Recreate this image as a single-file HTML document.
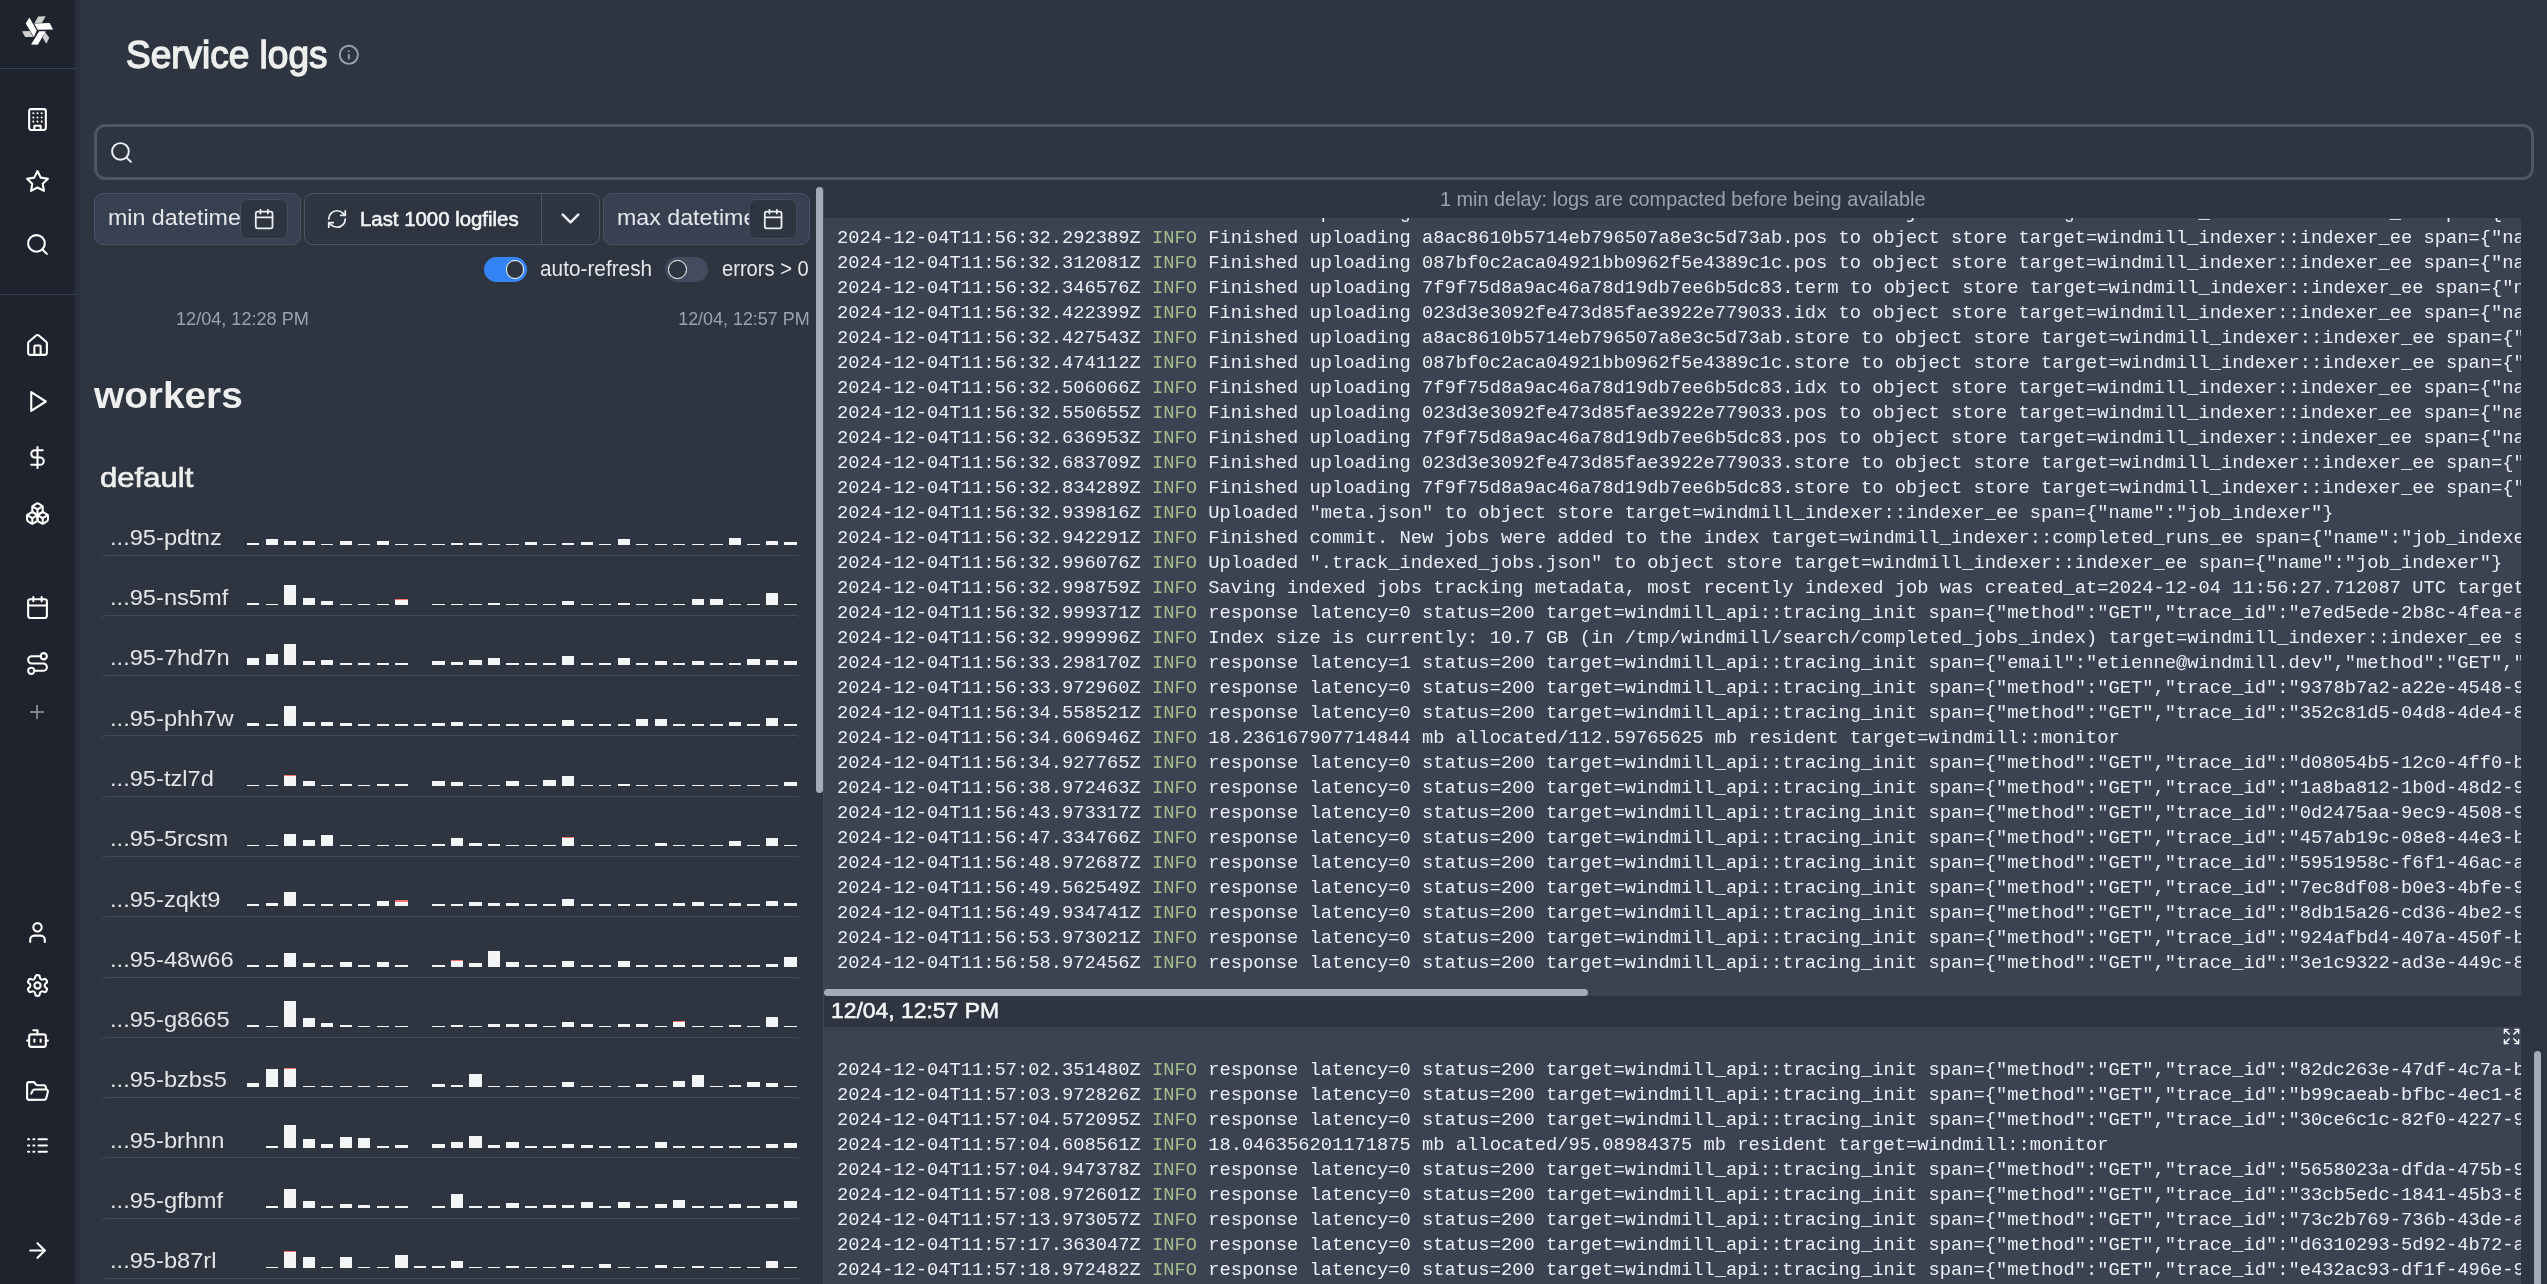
<!DOCTYPE html>
<html><head><meta charset="utf-8"><style>
html,body{margin:0;padding:0;width:2547px;height:1284px;overflow:hidden;background:#2e3440;}
</style></head><body><div style="position:absolute;left:0;top:0;width:2547px;height:1284px;will-change:transform">
<div style="position:absolute;left:74px;top:0px;width:2473px;height:1284px;box-sizing:border-box;background:#2e3440;"></div><div style="position:absolute;left:74px;top:0px;width:9px;height:1284px;box-sizing:border-box;background:linear-gradient(to right,#282d38,#2e3440);"></div><div style="position:absolute;left:0px;top:0px;width:74.8px;height:1284px;box-sizing:border-box;background:#1f232e;"></div><div style="position:absolute;left:0px;top:67.8px;width:74.8px;height:1.5px;box-sizing:border-box;background:#36404f;"></div><div style="position:absolute;left:0px;top:293.8px;width:74.8px;height:1.5px;box-sizing:border-box;background:#36404f;"></div><svg style="position:absolute;left:15px;top:8px" width="45" height="45" viewBox="0 0 1284 1284"><polygon fill="#ffffff" points="410,270 620,640 540,830 305,440"/><polygon fill="#ffffff" points="545,440 990,430 1085,612 650,620"/><polygon fill="#ffffff" points="690,660 880,660 650,1050 460,1045"/><polygon fill="#d0d0d0" points="660,240 875,235 770,420 560,430"/><polygon fill="#d0d0d0" points="200,660 420,655 520,825 290,825"/><polygon fill="#d0d0d0" points="860,690 980,850 890,1020 790,840"/></svg><svg style="position:absolute;left:25.00px;top:107.00px" width="25" height="25" viewBox="0 0 24 24" fill="none" stroke="#ffffff" stroke-width="2" stroke-linecap="round" stroke-linejoin="round" ><rect width="16" height="20" x="4" y="2" rx="2" ry="2"/><path d="M9 22v-4h6v4"/><path d="M8 6h.01"/><path d="M16 6h.01"/><path d="M12 6h.01"/><path d="M12 10h.01"/><path d="M12 14h.01"/><path d="M16 10h.01"/><path d="M16 14h.01"/><path d="M8 10h.01"/><path d="M8 14h.01"/></svg><svg style="position:absolute;left:25.00px;top:168.50px" width="25" height="25" viewBox="0 0 24 24" fill="none" stroke="#ffffff" stroke-width="2" stroke-linecap="round" stroke-linejoin="round" ><polygon points="12 2 15.09 8.26 22 9.27 17 14.14 18.18 21.02 12 17.77 5.82 21.02 7 14.14 2 9.27 8.91 8.26 12 2"/></svg><svg style="position:absolute;left:25.00px;top:232.00px" width="25" height="25" viewBox="0 0 24 24" fill="none" stroke="#ffffff" stroke-width="2" stroke-linecap="round" stroke-linejoin="round" ><circle cx="11" cy="11" r="8"/><path d="m21 21-4.3-4.3"/></svg><svg style="position:absolute;left:25.00px;top:332.50px" width="25" height="25" viewBox="0 0 24 24" fill="none" stroke="#ffffff" stroke-width="2" stroke-linecap="round" stroke-linejoin="round" ><path d="M15 21v-8a1 1 0 0 0-1-1h-4a1 1 0 0 0-1 1v8"/><path d="M3 10a2 2 0 0 1 .709-1.528l7-5.999a2 2 0 0 1 2.582 0l7 5.999A2 2 0 0 1 21 10v9a2 2 0 0 1-2 2H5a2 2 0 0 1-2-2z"/></svg><svg style="position:absolute;left:25.00px;top:388.50px" width="25" height="25" viewBox="0 0 24 24" fill="none" stroke="#ffffff" stroke-width="2" stroke-linecap="round" stroke-linejoin="round" ><polygon points="6 3 20 12 6 21 6 3"/></svg><svg style="position:absolute;left:25.00px;top:444.50px" width="25" height="25" viewBox="0 0 24 24" fill="none" stroke="#ffffff" stroke-width="2" stroke-linecap="round" stroke-linejoin="round" ><line x1="12" x2="12" y1="2" y2="22"/><path d="M17 5H9.5a3.5 3.5 0 0 0 0 7h5a3.5 3.5 0 0 1 0 7H6"/></svg><svg style="position:absolute;left:25.00px;top:500.50px" width="25" height="25" viewBox="0 0 24 24" fill="none" stroke="#ffffff" stroke-width="2" stroke-linecap="round" stroke-linejoin="round" ><path d="M2.97 12.92A2 2 0 0 0 2 14.63v3.24a2 2 0 0 0 .97 1.71l3 1.8a2 2 0 0 0 2.06 0L12 19v-5.5l-5-3-4.03 2.42Z"/><path d="m7 16.5-4.74-2.850"/><path d="m7 16.5 5-3"/><path d="M7 16.5v5.17"/><path d="M12 13.5V19l3.970 2.38a2 2 0 0 0 2.06 0l3-1.8a2 2 0 0 0 .97-1.71v-3.24a2 2 0 0 0-.97-1.71L17 10.5l-5 3Z"/><path d="m17 16.5-5-3"/><path d="m17 16.5 4.74-2.85"/><path d="M17 16.5v5.17"/><path d="M7.97 4.42A2 2 0 0 0 7 6.13v4.37l5 3 5-3V6.13a2 2 0 0 0-.97-1.71l-3-1.8a2 2 0 0 0-2.06 0l-3 1.8Z"/><path d="M12 8 7.26 5.15"/><path d="m12 8 4.74-2.85"/><path d="M12 13.5V8"/></svg><svg style="position:absolute;left:25.00px;top:594.50px" width="25" height="25" viewBox="0 0 24 24" fill="none" stroke="#ffffff" stroke-width="2" stroke-linecap="round" stroke-linejoin="round" ><rect width="18" height="18" x="3" y="4" rx="2" ry="2"/><line x1="16" x2="16" y1="2" y2="6"/><line x1="8" x2="8" y1="2" y2="6"/><line x1="3" x2="21" y1="10" y2="10"/></svg><svg style="position:absolute;left:25.00px;top:650.50px" width="25" height="25" viewBox="0 0 24 24" fill="none" stroke="#ffffff" stroke-width="2" stroke-linecap="round" stroke-linejoin="round" ><circle cx="6" cy="19" r="3"/><path d="M9 19h8.5a3.5 3.5 0 0 0 0-7h-11a3.5 3.5 0 0 1 0-7H15"/><circle cx="18" cy="5" r="3"/></svg><svg style="position:absolute;left:25.00px;top:919.50px" width="25" height="25" viewBox="0 0 24 24" fill="none" stroke="#ffffff" stroke-width="2" stroke-linecap="round" stroke-linejoin="round" ><path d="M19 21v-2a4 4 0 0 0-4-4H9a4 4 0 0 0-4 4v2"/><circle cx="12" cy="7" r="4"/></svg><svg style="position:absolute;left:25.00px;top:972.50px" width="25" height="25" viewBox="0 0 24 24" fill="none" stroke="#ffffff" stroke-width="2" stroke-linecap="round" stroke-linejoin="round" ><path d="M12.22 2h-.44a2 2 0 0 0-2 2v.18a2 2 0 0 1-1 1.73l-.43.25a2 2 0 0 1-2 0l-.15-.08a2 2 0 0 0-2.73.73l-.22.38a2 2 0 0 0 .73 2.73l.15.1a2 2 0 0 1 1 1.72v.51a2 2 0 0 1-1 1.74l-.15.09a2 2 0 0 0-.73 2.73l.22.38a2 2 0 0 0 2.73.73l.15-.08a2 2 0 0 1 2 0l.43.25a2 2 0 0 1 1 1.73V20a2 2 0 0 0 2 2h.44a2 2 0 0 0 2-2v-.18a2 2 0 0 1 1-1.73l.43-.25a2 2 0 0 1 2 0l.15.08a2 2 0 0 0 2.73-.73l.22-.39a2 2 0 0 0-.73-2.730l-.15-.08a2 2 0 0 1-1-1.74v-.5a2 2 0 0 1 1-1.74l.15-.09a2 2 0 0 0 .73-2.73l-.22-.38a2 2 0 0 0-2.73-.73l-.15.08a2 2 0 0 1-2 0l-.43-.25a2 2 0 0 1-1-1.73V4a2 2 0 0 0-2-2z"/><circle cx="12" cy="12" r="3"/></svg><svg style="position:absolute;left:25.00px;top:1025.50px" width="25" height="25" viewBox="0 0 24 24" fill="none" stroke="#ffffff" stroke-width="2" stroke-linecap="round" stroke-linejoin="round" ><path d="M12 8V4H8"/><rect width="16" height="12" x="4" y="8" rx="2"/><path d="M2 14h2"/><path d="M20 14h2"/><path d="M15 13v2"/><path d="M9 13v2"/></svg><svg style="position:absolute;left:25.00px;top:1078.50px" width="25" height="25" viewBox="0 0 24 24" fill="none" stroke="#ffffff" stroke-width="2" stroke-linecap="round" stroke-linejoin="round" ><path d="m6 14 1.5-2.9A2 2 0 0 1 9.24 10H20a2 2 0 0 1 1.940 2.5l-1.54 6a2 2 0 0 1-1.95 1.5H4a2 2 0 0 1-2-2V5a2 2 0 0 1 2-2h3.9a2 2 0 0 1 1.69.9l.81 1.2a2 2 0 0 0 1.67.9H18a2 2 0 0 1 2 2v2"/></svg><svg style="position:absolute;left:25.00px;top:1132.50px" width="25" height="25" viewBox="0 0 24 24" fill="none" stroke="#ffffff" stroke-width="2" stroke-linecap="round" stroke-linejoin="round" ><path d="M13 12h8"/><path d="M13 18h8"/><path d="M13 6h8"/><path d="M3 12h1"/><path d="M3 18h1"/><path d="M3 6h1"/><path d="M8 12h1"/><path d="M8 18h1"/><path d="M8 6h1"/></svg><svg style="position:absolute;left:25.00px;top:1237.50px" width="25" height="25" viewBox="0 0 24 24" fill="none" stroke="#ffffff" stroke-width="2" stroke-linecap="round" stroke-linejoin="round" ><path d="M5 12h14"/><path d="m12 5 7 7-7 7"/></svg><svg style="position:absolute;left:26.00px;top:701.00px" width="22" height="22" viewBox="0 0 24 24" fill="none" stroke="#9ca3af" stroke-width="1.6" stroke-linecap="round" stroke-linejoin="round" ><path d="M5 12h14"/><path d="M12 5v14"/></svg><div style="position:absolute;left:125.50px;top:33.18px;font:400 38.7px/44.47px 'Liberation Sans', sans-serif;color:#eeeeee;white-space:pre;transform:scaleX(0.956);transform-origin:0 0;-webkit-text-stroke:1.4px #eeeeee;">Service logs</div><svg style="position:absolute;left:337.55px;top:44.05px" width="21.7" height="21.7" viewBox="0 0 24 24" fill="none" stroke="#9aa3b3" stroke-width="2.1" stroke-linecap="round" stroke-linejoin="round" ><circle cx="12" cy="12" r="10"/><path d="M12 16v-4"/><path d="M12 8h.01"/></svg><div style="position:absolute;left:94px;top:124px;width:2440px;height:55.7px;box-sizing:border-box;border:3px solid #4b5767;border-radius:11.5px;"></div><svg style="position:absolute;left:108.90px;top:140.00px" width="25" height="25" viewBox="0 0 24 24" fill="none" stroke="#eceff4" stroke-width="1.9" stroke-linecap="round" stroke-linejoin="round" ><circle cx="11" cy="11" r="8"/><path d="m21 21-4.3-4.3"/></svg><div style="position:absolute;left:94px;top:193px;width:207px;height:52px;box-sizing:border-box;background:#374151;border:1px solid #475366;border-radius:9px;"></div><div style="position:absolute;left:108.00px;top:205.18px;font:400 21.9px/25.16px 'Liberation Sans', sans-serif;color:#e5e7eb;white-space:pre;transform:scaleX(1.06);transform-origin:0 0;">min datetime</div><div style="position:absolute;left:239.5px;top:199px;width:48px;height:39.5px;box-sizing:border-box;background:#2e3440;border:1px solid #434c5c;border-radius:7px;"></div><svg style="position:absolute;left:252.75px;top:208.15px" width="22.3" height="22.3" viewBox="0 0 24 24" fill="none" stroke="#eceff4" stroke-width="1.9" stroke-linecap="round" stroke-linejoin="round" ><rect width="18" height="18" x="3" y="4" rx="2" ry="2"/><line x1="16" x2="16" y1="2" y2="6"/><line x1="8" x2="8" y1="2" y2="6"/><line x1="3" x2="21" y1="10" y2="10"/></svg><div style="position:absolute;left:304px;top:193px;width:296px;height:52px;box-sizing:border-box;border:1px solid #4b5563;border-radius:9px;"></div><div style="position:absolute;left:541px;top:193px;width:1px;height:52px;box-sizing:border-box;background:#4b5563;"></div><svg style="position:absolute;left:326.00px;top:208.00px" width="22" height="22" viewBox="0 0 24 24" fill="none" stroke="#eceff4" stroke-width="1.9" stroke-linecap="round" stroke-linejoin="round" ><path d="M3 12a9 9 0 0 1 9-9 9.75 9.75 0 0 1 6.74 2.74L21 8"/><path d="M21 3v5h-5"/><path d="M21 12a9 9 0 0 1-9 9 9.75 9.75 0 0 1-6.74-2.74L3 16"/><path d="M8 16H3v5"/></svg><div style="position:absolute;left:360.30px;top:207.56px;font:400 19.6px/22.52px 'Liberation Sans', sans-serif;color:#f3f4f6;white-space:pre;transform:scaleX(1.04);transform-origin:0 0;-webkit-text-stroke:0.55px #f3f4f6;">Last 1000 logfiles</div><svg style="position:absolute;left:555.00px;top:203.00px" width="31" height="31" viewBox="0 0 24 24" fill="none" stroke="#eceff4" stroke-width="1.9" stroke-linecap="round" stroke-linejoin="round" ><path d="m6 9 6 6 6-6"/></svg><div style="position:absolute;left:603px;top:193px;width:207px;height:52px;box-sizing:border-box;background:#374151;border:1px solid #475366;border-radius:9px;"></div><div style="position:absolute;left:617.00px;top:205.18px;font:400 21.9px/25.16px 'Liberation Sans', sans-serif;color:#e5e7eb;white-space:pre;transform:scaleX(1.06);transform-origin:0 0;">max datetime</div><div style="position:absolute;left:748.5px;top:199px;width:48px;height:39.5px;box-sizing:border-box;background:#2e3440;border:1px solid #434c5c;border-radius:7px;"></div><svg style="position:absolute;left:761.75px;top:208.15px" width="22.3" height="22.3" viewBox="0 0 24 24" fill="none" stroke="#eceff4" stroke-width="1.9" stroke-linecap="round" stroke-linejoin="round" ><rect width="18" height="18" x="3" y="4" rx="2" ry="2"/><line x1="16" x2="16" y1="2" y2="6"/><line x1="8" x2="8" y1="2" y2="6"/><line x1="3" x2="21" y1="10" y2="10"/></svg><div style="position:absolute;left:483.8px;top:256.9px;width:43.1px;height:25px;box-sizing:border-box;background:#3584f6;border-radius:12.5px;"></div><div style="position:absolute;left:505.5px;top:260.1px;width:18.6px;height:18.6px;box-sizing:border-box;border-radius:50%;border:1.6px solid #fff;background:#2e3440"></div><div style="position:absolute;left:540.00px;top:256.18px;font:400 21.9px/25.16px 'Liberation Sans', sans-serif;color:#e5e7eb;white-space:pre;transform:scaleX(0.95);transform-origin:0 0;">auto-refresh</div><div style="position:absolute;left:664.9px;top:256.9px;width:42.8px;height:25px;box-sizing:border-box;background:#434c5e;border-radius:12.5px;"></div><div style="position:absolute;left:668px;top:260.1px;width:18.6px;height:18.6px;box-sizing:border-box;border-radius:50%;border:1.6px solid #fff;background:#2e3440"></div><div style="position:absolute;left:722.00px;top:256.18px;font:400 21.9px/25.16px 'Liberation Sans', sans-serif;color:#e5e7eb;white-space:pre;transform:scaleX(0.92);transform-origin:0 0;">errors &gt; 0</div><div style="position:absolute;left:176.20px;top:308.23px;font:400 18.75px/21.54px 'Liberation Sans', sans-serif;color:#9ca3af;white-space:pre;transform:scaleX(0.965);transform-origin:0 0;">12/04, 12:28 PM</div><div style="position:absolute;right:1737.50px;top:308.23px;font:400 18.75px/21.54px 'Liberation Sans', sans-serif;color:#9ca3af;white-space:pre;transform:scaleX(0.955);transform-origin:100% 0;">12/04, 12:57 PM</div><div style="position:absolute;left:94.00px;top:374.36px;font:700 37.5px/43.09px 'Liberation Sans', sans-serif;color:#efefef;white-space:pre;transform:scaleX(1.034);transform-origin:0 0;">workers</div><div style="position:absolute;left:100.30px;top:461.21px;font:400 28.5px/32.75px 'Liberation Sans', sans-serif;color:#efefef;white-space:pre;transform:scaleX(1.09);transform-origin:0 0;-webkit-text-stroke:0.7px #efefef;">default</div><div style="position:absolute;left:823px;top:187px;width:1px;height:1097px;box-sizing:border-box;background:#3b4a5f;"></div><div style="position:absolute;left:816px;top:187px;width:7px;height:606px;box-sizing:border-box;background:#a3abb8;border-radius:4px;"></div><div style="position:absolute;left:110.20px;top:524.88px;font:400 21.9px/25.16px 'Liberation Sans', sans-serif;color:#e4e5e8;white-space:pre;transform:scaleX(1.08);transform-origin:0 0;">...95-pdtnz</div><div style="position:absolute;left:247.00px;top:542.70px;width:12.3px;height:2px;background:#f3f4f6"></div><div style="position:absolute;left:265.53px;top:538.70px;width:12.3px;height:6px;background:#f3f4f6"></div><div style="position:absolute;left:284.06px;top:540.70px;width:12.3px;height:4px;background:#f3f4f6"></div><div style="position:absolute;left:302.59px;top:540.70px;width:12.3px;height:4px;background:#f3f4f6"></div><div style="position:absolute;left:321.12px;top:543.70px;width:12.3px;height:1px;background:#f3f4f6"></div><div style="position:absolute;left:339.65px;top:540.70px;width:12.3px;height:4px;background:#f3f4f6"></div><div style="position:absolute;left:358.18px;top:543.70px;width:12.3px;height:1px;background:#f3f4f6"></div><div style="position:absolute;left:376.71px;top:540.70px;width:12.3px;height:4px;background:#f3f4f6"></div><div style="position:absolute;left:395.24px;top:543.70px;width:12.3px;height:1px;background:#f3f4f6"></div><div style="position:absolute;left:413.77px;top:543.70px;width:12.3px;height:1px;background:#f3f4f6"></div><div style="position:absolute;left:432.30px;top:543.70px;width:12.3px;height:1px;background:#f3f4f6"></div><div style="position:absolute;left:450.83px;top:542.70px;width:12.3px;height:2px;background:#f3f4f6"></div><div style="position:absolute;left:469.36px;top:542.70px;width:12.3px;height:2px;background:#f3f4f6"></div><div style="position:absolute;left:487.89px;top:543.70px;width:12.3px;height:1px;background:#f3f4f6"></div><div style="position:absolute;left:506.42px;top:543.70px;width:12.3px;height:1px;background:#f3f4f6"></div><div style="position:absolute;left:524.95px;top:541.70px;width:12.3px;height:3px;background:#f3f4f6"></div><div style="position:absolute;left:543.48px;top:543.70px;width:12.3px;height:1px;background:#f3f4f6"></div><div style="position:absolute;left:562.01px;top:542.70px;width:12.3px;height:2px;background:#f3f4f6"></div><div style="position:absolute;left:580.54px;top:541.70px;width:12.3px;height:3px;background:#f3f4f6"></div><div style="position:absolute;left:599.07px;top:543.70px;width:12.3px;height:1px;background:#f3f4f6"></div><div style="position:absolute;left:617.60px;top:538.70px;width:12.3px;height:6px;background:#f3f4f6"></div><div style="position:absolute;left:636.13px;top:543.70px;width:12.3px;height:1px;background:#f3f4f6"></div><div style="position:absolute;left:654.66px;top:543.70px;width:12.3px;height:1px;background:#f3f4f6"></div><div style="position:absolute;left:673.19px;top:543.70px;width:12.3px;height:1px;background:#f3f4f6"></div><div style="position:absolute;left:691.72px;top:543.70px;width:12.3px;height:1px;background:#f3f4f6"></div><div style="position:absolute;left:710.25px;top:543.70px;width:12.3px;height:1px;background:#f3f4f6"></div><div style="position:absolute;left:728.78px;top:537.70px;width:12.3px;height:7px;background:#f3f4f6"></div><div style="position:absolute;left:747.31px;top:543.70px;width:12.3px;height:1px;background:#f3f4f6"></div><div style="position:absolute;left:765.84px;top:540.70px;width:12.3px;height:4px;background:#f3f4f6"></div><div style="position:absolute;left:784.37px;top:541.70px;width:12.3px;height:3px;background:#f3f4f6"></div><div style="position:absolute;left:100px;top:554.50px;width:703px;height:14px;box-sizing:border-box;border-top:1px solid #424b5b;border-radius:8px"></div><div style="position:absolute;left:110.20px;top:585.17px;font:400 21.9px/25.16px 'Liberation Sans', sans-serif;color:#e4e5e8;white-space:pre;transform:scaleX(1.08);transform-origin:0 0;">...95-ns5mf</div><div style="position:absolute;left:247.00px;top:602.99px;width:12.3px;height:2px;background:#f3f4f6"></div><div style="position:absolute;left:265.53px;top:603.99px;width:12.3px;height:1px;background:#f3f4f6"></div><div style="position:absolute;left:284.06px;top:584.99px;width:12.3px;height:20px;background:#f3f4f6"></div><div style="position:absolute;left:302.59px;top:597.99px;width:12.3px;height:7px;background:#f3f4f6"></div><div style="position:absolute;left:321.12px;top:600.99px;width:12.3px;height:4px;background:#f3f4f6"></div><div style="position:absolute;left:339.65px;top:603.99px;width:12.3px;height:1px;background:#f3f4f6"></div><div style="position:absolute;left:358.18px;top:603.99px;width:12.3px;height:1px;background:#f3f4f6"></div><div style="position:absolute;left:376.71px;top:603.99px;width:12.3px;height:1px;background:#f3f4f6"></div><div style="position:absolute;left:395.24px;top:598.99px;width:12.3px;height:6px;background:#f3f4f6"></div><div style="position:absolute;left:395.24px;top:598.99px;width:12.3px;height:1.2px;background:#f87171"></div><div style="position:absolute;left:432.30px;top:603.99px;width:12.3px;height:1px;background:#f3f4f6"></div><div style="position:absolute;left:450.83px;top:603.99px;width:12.3px;height:1px;background:#f3f4f6"></div><div style="position:absolute;left:469.36px;top:603.99px;width:12.3px;height:1px;background:#f3f4f6"></div><div style="position:absolute;left:487.89px;top:602.99px;width:12.3px;height:2px;background:#f3f4f6"></div><div style="position:absolute;left:506.42px;top:603.99px;width:12.3px;height:1px;background:#f3f4f6"></div><div style="position:absolute;left:524.95px;top:603.99px;width:12.3px;height:1px;background:#f3f4f6"></div><div style="position:absolute;left:543.48px;top:603.99px;width:12.3px;height:1px;background:#f3f4f6"></div><div style="position:absolute;left:562.01px;top:600.99px;width:12.3px;height:4px;background:#f3f4f6"></div><div style="position:absolute;left:580.54px;top:603.99px;width:12.3px;height:1px;background:#f3f4f6"></div><div style="position:absolute;left:599.07px;top:603.99px;width:12.3px;height:1px;background:#f3f4f6"></div><div style="position:absolute;left:617.60px;top:602.99px;width:12.3px;height:2px;background:#f3f4f6"></div><div style="position:absolute;left:636.13px;top:603.99px;width:12.3px;height:1px;background:#f3f4f6"></div><div style="position:absolute;left:654.66px;top:603.99px;width:12.3px;height:1px;background:#f3f4f6"></div><div style="position:absolute;left:673.19px;top:603.99px;width:12.3px;height:1px;background:#f3f4f6"></div><div style="position:absolute;left:691.72px;top:598.99px;width:12.3px;height:6px;background:#f3f4f6"></div><div style="position:absolute;left:710.25px;top:598.99px;width:12.3px;height:6px;background:#f3f4f6"></div><div style="position:absolute;left:728.78px;top:603.99px;width:12.3px;height:1px;background:#f3f4f6"></div><div style="position:absolute;left:747.31px;top:603.99px;width:12.3px;height:1px;background:#f3f4f6"></div><div style="position:absolute;left:765.84px;top:592.99px;width:12.3px;height:12px;background:#f3f4f6"></div><div style="position:absolute;left:784.37px;top:603.99px;width:12.3px;height:1px;background:#f3f4f6"></div><div style="position:absolute;left:100px;top:614.79px;width:703px;height:14px;box-sizing:border-box;border-top:1px solid #424b5b;border-radius:8px"></div><div style="position:absolute;left:110.20px;top:645.46px;font:400 21.9px/25.16px 'Liberation Sans', sans-serif;color:#e4e5e8;white-space:pre;transform:scaleX(1.08);transform-origin:0 0;">...95-7hd7n</div><div style="position:absolute;left:247.00px;top:658.28px;width:12.3px;height:7px;background:#f3f4f6"></div><div style="position:absolute;left:265.53px;top:654.28px;width:12.3px;height:11px;background:#f3f4f6"></div><div style="position:absolute;left:284.06px;top:644.28px;width:12.3px;height:21px;background:#f3f4f6"></div><div style="position:absolute;left:302.59px;top:661.28px;width:12.3px;height:4px;background:#f3f4f6"></div><div style="position:absolute;left:321.12px;top:660.28px;width:12.3px;height:5px;background:#f3f4f6"></div><div style="position:absolute;left:339.65px;top:663.28px;width:12.3px;height:2px;background:#f3f4f6"></div><div style="position:absolute;left:358.18px;top:663.28px;width:12.3px;height:2px;background:#f3f4f6"></div><div style="position:absolute;left:376.71px;top:663.28px;width:12.3px;height:2px;background:#f3f4f6"></div><div style="position:absolute;left:395.24px;top:663.28px;width:12.3px;height:2px;background:#f3f4f6"></div><div style="position:absolute;left:432.30px;top:661.28px;width:12.3px;height:4px;background:#f3f4f6"></div><div style="position:absolute;left:450.83px;top:662.28px;width:12.3px;height:3px;background:#f3f4f6"></div><div style="position:absolute;left:469.36px;top:660.28px;width:12.3px;height:5px;background:#f3f4f6"></div><div style="position:absolute;left:487.89px;top:658.28px;width:12.3px;height:7px;background:#f3f4f6"></div><div style="position:absolute;left:506.42px;top:663.28px;width:12.3px;height:2px;background:#f3f4f6"></div><div style="position:absolute;left:524.95px;top:663.28px;width:12.3px;height:2px;background:#f3f4f6"></div><div style="position:absolute;left:543.48px;top:663.28px;width:12.3px;height:2px;background:#f3f4f6"></div><div style="position:absolute;left:562.01px;top:656.28px;width:12.3px;height:9px;background:#f3f4f6"></div><div style="position:absolute;left:580.54px;top:663.28px;width:12.3px;height:2px;background:#f3f4f6"></div><div style="position:absolute;left:599.07px;top:663.28px;width:12.3px;height:2px;background:#f3f4f6"></div><div style="position:absolute;left:617.60px;top:658.28px;width:12.3px;height:7px;background:#f3f4f6"></div><div style="position:absolute;left:636.13px;top:663.28px;width:12.3px;height:2px;background:#f3f4f6"></div><div style="position:absolute;left:654.66px;top:661.28px;width:12.3px;height:4px;background:#f3f4f6"></div><div style="position:absolute;left:673.19px;top:663.28px;width:12.3px;height:2px;background:#f3f4f6"></div><div style="position:absolute;left:691.72px;top:661.28px;width:12.3px;height:4px;background:#f3f4f6"></div><div style="position:absolute;left:710.25px;top:663.28px;width:12.3px;height:2px;background:#f3f4f6"></div><div style="position:absolute;left:728.78px;top:663.28px;width:12.3px;height:2px;background:#f3f4f6"></div><div style="position:absolute;left:747.31px;top:659.28px;width:12.3px;height:6px;background:#f3f4f6"></div><div style="position:absolute;left:765.84px;top:660.28px;width:12.3px;height:5px;background:#f3f4f6"></div><div style="position:absolute;left:784.37px;top:661.28px;width:12.3px;height:4px;background:#f3f4f6"></div><div style="position:absolute;left:100px;top:675.08px;width:703px;height:14px;box-sizing:border-box;border-top:1px solid #424b5b;border-radius:8px"></div><div style="position:absolute;left:110.20px;top:705.75px;font:400 21.9px/25.16px 'Liberation Sans', sans-serif;color:#e4e5e8;white-space:pre;transform:scaleX(1.08);transform-origin:0 0;">...95-phh7w</div><div style="position:absolute;left:247.00px;top:722.57px;width:12.3px;height:3px;background:#f3f4f6"></div><div style="position:absolute;left:265.53px;top:724.07px;width:12.3px;height:1.5px;background:#f3f4f6"></div><div style="position:absolute;left:284.06px;top:705.57px;width:12.3px;height:20px;background:#f3f4f6"></div><div style="position:absolute;left:302.59px;top:721.57px;width:12.3px;height:4px;background:#f3f4f6"></div><div style="position:absolute;left:321.12px;top:721.57px;width:12.3px;height:4px;background:#f3f4f6"></div><div style="position:absolute;left:339.65px;top:722.57px;width:12.3px;height:3px;background:#f3f4f6"></div><div style="position:absolute;left:358.18px;top:724.07px;width:12.3px;height:1.5px;background:#f3f4f6"></div><div style="position:absolute;left:376.71px;top:724.07px;width:12.3px;height:1.5px;background:#f3f4f6"></div><div style="position:absolute;left:395.24px;top:724.07px;width:12.3px;height:1.5px;background:#f3f4f6"></div><div style="position:absolute;left:413.77px;top:724.07px;width:12.3px;height:1.5px;background:#f3f4f6"></div><div style="position:absolute;left:432.30px;top:722.57px;width:12.3px;height:3px;background:#f3f4f6"></div><div style="position:absolute;left:450.83px;top:721.57px;width:12.3px;height:4px;background:#f3f4f6"></div><div style="position:absolute;left:469.36px;top:724.07px;width:12.3px;height:1.5px;background:#f3f4f6"></div><div style="position:absolute;left:487.89px;top:724.07px;width:12.3px;height:1.5px;background:#f3f4f6"></div><div style="position:absolute;left:506.42px;top:724.07px;width:12.3px;height:1.5px;background:#f3f4f6"></div><div style="position:absolute;left:524.95px;top:724.07px;width:12.3px;height:1.5px;background:#f3f4f6"></div><div style="position:absolute;left:543.48px;top:724.07px;width:12.3px;height:1.5px;background:#f3f4f6"></div><div style="position:absolute;left:562.01px;top:720.07px;width:12.3px;height:5.5px;background:#f3f4f6"></div><div style="position:absolute;left:580.54px;top:724.07px;width:12.3px;height:1.5px;background:#f3f4f6"></div><div style="position:absolute;left:599.07px;top:724.07px;width:12.3px;height:1.5px;background:#f3f4f6"></div><div style="position:absolute;left:617.60px;top:724.07px;width:12.3px;height:1.5px;background:#f3f4f6"></div><div style="position:absolute;left:636.13px;top:718.87px;width:12.3px;height:6.7px;background:#f3f4f6"></div><div style="position:absolute;left:654.66px;top:718.87px;width:12.3px;height:6.7px;background:#f3f4f6"></div><div style="position:absolute;left:673.19px;top:724.07px;width:12.3px;height:1.5px;background:#f3f4f6"></div><div style="position:absolute;left:691.72px;top:724.07px;width:12.3px;height:1.5px;background:#f3f4f6"></div><div style="position:absolute;left:710.25px;top:724.07px;width:12.3px;height:1.5px;background:#f3f4f6"></div><div style="position:absolute;left:728.78px;top:721.57px;width:12.3px;height:4px;background:#f3f4f6"></div><div style="position:absolute;left:747.31px;top:724.07px;width:12.3px;height:1.5px;background:#f3f4f6"></div><div style="position:absolute;left:765.84px;top:717.77px;width:12.3px;height:7.8px;background:#f3f4f6"></div><div style="position:absolute;left:784.37px;top:724.07px;width:12.3px;height:1.5px;background:#f3f4f6"></div><div style="position:absolute;left:100px;top:735.37px;width:703px;height:14px;box-sizing:border-box;border-top:1px solid #424b5b;border-radius:8px"></div><div style="position:absolute;left:110.20px;top:766.04px;font:400 21.9px/25.16px 'Liberation Sans', sans-serif;color:#e4e5e8;white-space:pre;transform:scaleX(1.08);transform-origin:0 0;">...95-tzl7d</div><div style="position:absolute;left:247.00px;top:784.86px;width:12.3px;height:1px;background:#f3f4f6"></div><div style="position:absolute;left:265.53px;top:784.86px;width:12.3px;height:1px;background:#f3f4f6"></div><div style="position:absolute;left:284.06px;top:774.86px;width:12.3px;height:11px;background:#f3f4f6"></div><div style="position:absolute;left:284.06px;top:774.86px;width:12.3px;height:1.2px;background:#f87171"></div><div style="position:absolute;left:302.59px;top:780.86px;width:12.3px;height:5px;background:#f3f4f6"></div><div style="position:absolute;left:321.12px;top:784.86px;width:12.3px;height:1px;background:#f3f4f6"></div><div style="position:absolute;left:339.65px;top:783.86px;width:12.3px;height:2px;background:#f3f4f6"></div><div style="position:absolute;left:358.18px;top:784.86px;width:12.3px;height:1px;background:#f3f4f6"></div><div style="position:absolute;left:376.71px;top:783.86px;width:12.3px;height:2px;background:#f3f4f6"></div><div style="position:absolute;left:395.24px;top:783.86px;width:12.3px;height:2px;background:#f3f4f6"></div><div style="position:absolute;left:432.30px;top:780.86px;width:12.3px;height:5px;background:#f3f4f6"></div><div style="position:absolute;left:450.83px;top:781.86px;width:12.3px;height:4px;background:#f3f4f6"></div><div style="position:absolute;left:469.36px;top:784.86px;width:12.3px;height:1px;background:#f3f4f6"></div><div style="position:absolute;left:487.89px;top:784.86px;width:12.3px;height:1px;background:#f3f4f6"></div><div style="position:absolute;left:506.42px;top:780.86px;width:12.3px;height:5px;background:#f3f4f6"></div><div style="position:absolute;left:524.95px;top:784.86px;width:12.3px;height:1px;background:#f3f4f6"></div><div style="position:absolute;left:543.48px;top:779.86px;width:12.3px;height:6px;background:#f3f4f6"></div><div style="position:absolute;left:562.01px;top:775.86px;width:12.3px;height:10px;background:#f3f4f6"></div><div style="position:absolute;left:580.54px;top:784.86px;width:12.3px;height:1px;background:#f3f4f6"></div><div style="position:absolute;left:599.07px;top:784.86px;width:12.3px;height:1px;background:#f3f4f6"></div><div style="position:absolute;left:617.60px;top:783.86px;width:12.3px;height:2px;background:#f3f4f6"></div><div style="position:absolute;left:636.13px;top:784.86px;width:12.3px;height:1px;background:#f3f4f6"></div><div style="position:absolute;left:654.66px;top:784.86px;width:12.3px;height:1px;background:#f3f4f6"></div><div style="position:absolute;left:673.19px;top:784.86px;width:12.3px;height:1px;background:#f3f4f6"></div><div style="position:absolute;left:691.72px;top:784.86px;width:12.3px;height:1px;background:#f3f4f6"></div><div style="position:absolute;left:710.25px;top:784.86px;width:12.3px;height:1px;background:#f3f4f6"></div><div style="position:absolute;left:728.78px;top:784.86px;width:12.3px;height:1px;background:#f3f4f6"></div><div style="position:absolute;left:747.31px;top:784.86px;width:12.3px;height:1px;background:#f3f4f6"></div><div style="position:absolute;left:765.84px;top:784.86px;width:12.3px;height:1px;background:#f3f4f6"></div><div style="position:absolute;left:784.37px;top:781.86px;width:12.3px;height:4px;background:#f3f4f6"></div><div style="position:absolute;left:100px;top:795.66px;width:703px;height:14px;box-sizing:border-box;border-top:1px solid #424b5b;border-radius:8px"></div><div style="position:absolute;left:110.20px;top:826.33px;font:400 21.9px/25.16px 'Liberation Sans', sans-serif;color:#e4e5e8;white-space:pre;transform:scaleX(1.08);transform-origin:0 0;">...95-5rcsm</div><div style="position:absolute;left:247.00px;top:845.15px;width:12.3px;height:1px;background:#f3f4f6"></div><div style="position:absolute;left:265.53px;top:845.15px;width:12.3px;height:1px;background:#f3f4f6"></div><div style="position:absolute;left:284.06px;top:834.15px;width:12.3px;height:12px;background:#f3f4f6"></div><div style="position:absolute;left:302.59px;top:840.15px;width:12.3px;height:6px;background:#f3f4f6"></div><div style="position:absolute;left:321.12px;top:835.15px;width:12.3px;height:11px;background:#f3f4f6"></div><div style="position:absolute;left:339.65px;top:845.15px;width:12.3px;height:1px;background:#f3f4f6"></div><div style="position:absolute;left:358.18px;top:845.15px;width:12.3px;height:1px;background:#f3f4f6"></div><div style="position:absolute;left:376.71px;top:845.15px;width:12.3px;height:1px;background:#f3f4f6"></div><div style="position:absolute;left:395.24px;top:845.15px;width:12.3px;height:1px;background:#f3f4f6"></div><div style="position:absolute;left:413.77px;top:845.15px;width:12.3px;height:1px;background:#f3f4f6"></div><div style="position:absolute;left:432.30px;top:844.15px;width:12.3px;height:2px;background:#f3f4f6"></div><div style="position:absolute;left:450.83px;top:838.15px;width:12.3px;height:8px;background:#f3f4f6"></div><div style="position:absolute;left:469.36px;top:843.15px;width:12.3px;height:3px;background:#f3f4f6"></div><div style="position:absolute;left:487.89px;top:844.15px;width:12.3px;height:2px;background:#f3f4f6"></div><div style="position:absolute;left:506.42px;top:845.15px;width:12.3px;height:1px;background:#f3f4f6"></div><div style="position:absolute;left:524.95px;top:845.15px;width:12.3px;height:1px;background:#f3f4f6"></div><div style="position:absolute;left:543.48px;top:845.15px;width:12.3px;height:1px;background:#f3f4f6"></div><div style="position:absolute;left:562.01px;top:837.15px;width:12.3px;height:9px;background:#f3f4f6"></div><div style="position:absolute;left:562.01px;top:837.15px;width:12.3px;height:1.2px;background:#f87171"></div><div style="position:absolute;left:580.54px;top:845.15px;width:12.3px;height:1px;background:#f3f4f6"></div><div style="position:absolute;left:599.07px;top:845.15px;width:12.3px;height:1px;background:#f3f4f6"></div><div style="position:absolute;left:617.60px;top:845.15px;width:12.3px;height:1px;background:#f3f4f6"></div><div style="position:absolute;left:636.13px;top:845.15px;width:12.3px;height:1px;background:#f3f4f6"></div><div style="position:absolute;left:654.66px;top:843.15px;width:12.3px;height:3px;background:#f3f4f6"></div><div style="position:absolute;left:673.19px;top:845.15px;width:12.3px;height:1px;background:#f3f4f6"></div><div style="position:absolute;left:691.72px;top:845.15px;width:12.3px;height:1px;background:#f3f4f6"></div><div style="position:absolute;left:710.25px;top:845.15px;width:12.3px;height:1px;background:#f3f4f6"></div><div style="position:absolute;left:728.78px;top:841.15px;width:12.3px;height:5px;background:#f3f4f6"></div><div style="position:absolute;left:747.31px;top:845.15px;width:12.3px;height:1px;background:#f3f4f6"></div><div style="position:absolute;left:765.84px;top:838.15px;width:12.3px;height:8px;background:#f3f4f6"></div><div style="position:absolute;left:784.37px;top:845.15px;width:12.3px;height:1px;background:#f3f4f6"></div><div style="position:absolute;left:100px;top:855.95px;width:703px;height:14px;box-sizing:border-box;border-top:1px solid #424b5b;border-radius:8px"></div><div style="position:absolute;left:110.20px;top:886.62px;font:400 21.9px/25.16px 'Liberation Sans', sans-serif;color:#e4e5e8;white-space:pre;transform:scaleX(1.08);transform-origin:0 0;">...95-zqkt9</div><div style="position:absolute;left:247.00px;top:904.44px;width:12.3px;height:2px;background:#f3f4f6"></div><div style="position:absolute;left:265.53px;top:903.44px;width:12.3px;height:3px;background:#f3f4f6"></div><div style="position:absolute;left:284.06px;top:892.44px;width:12.3px;height:14px;background:#f3f4f6"></div><div style="position:absolute;left:302.59px;top:904.44px;width:12.3px;height:2px;background:#f3f4f6"></div><div style="position:absolute;left:321.12px;top:904.44px;width:12.3px;height:2px;background:#f3f4f6"></div><div style="position:absolute;left:339.65px;top:904.44px;width:12.3px;height:2px;background:#f3f4f6"></div><div style="position:absolute;left:358.18px;top:904.44px;width:12.3px;height:2px;background:#f3f4f6"></div><div style="position:absolute;left:376.71px;top:901.44px;width:12.3px;height:5px;background:#f3f4f6"></div><div style="position:absolute;left:395.24px;top:900.44px;width:12.3px;height:6px;background:#f3f4f6"></div><div style="position:absolute;left:395.24px;top:900.44px;width:12.3px;height:1.2px;background:#f87171"></div><div style="position:absolute;left:432.30px;top:904.44px;width:12.3px;height:2px;background:#f3f4f6"></div><div style="position:absolute;left:450.83px;top:904.44px;width:12.3px;height:2px;background:#f3f4f6"></div><div style="position:absolute;left:469.36px;top:902.44px;width:12.3px;height:4px;background:#f3f4f6"></div><div style="position:absolute;left:487.89px;top:903.44px;width:12.3px;height:3px;background:#f3f4f6"></div><div style="position:absolute;left:506.42px;top:903.44px;width:12.3px;height:3px;background:#f3f4f6"></div><div style="position:absolute;left:524.95px;top:904.44px;width:12.3px;height:2px;background:#f3f4f6"></div><div style="position:absolute;left:543.48px;top:904.44px;width:12.3px;height:2px;background:#f3f4f6"></div><div style="position:absolute;left:562.01px;top:899.44px;width:12.3px;height:7px;background:#f3f4f6"></div><div style="position:absolute;left:580.54px;top:904.44px;width:12.3px;height:2px;background:#f3f4f6"></div><div style="position:absolute;left:599.07px;top:904.44px;width:12.3px;height:2px;background:#f3f4f6"></div><div style="position:absolute;left:617.60px;top:904.44px;width:12.3px;height:2px;background:#f3f4f6"></div><div style="position:absolute;left:636.13px;top:904.44px;width:12.3px;height:2px;background:#f3f4f6"></div><div style="position:absolute;left:654.66px;top:904.44px;width:12.3px;height:2px;background:#f3f4f6"></div><div style="position:absolute;left:673.19px;top:903.44px;width:12.3px;height:3px;background:#f3f4f6"></div><div style="position:absolute;left:691.72px;top:902.44px;width:12.3px;height:4px;background:#f3f4f6"></div><div style="position:absolute;left:710.25px;top:904.44px;width:12.3px;height:2px;background:#f3f4f6"></div><div style="position:absolute;left:728.78px;top:903.44px;width:12.3px;height:3px;background:#f3f4f6"></div><div style="position:absolute;left:747.31px;top:904.44px;width:12.3px;height:2px;background:#f3f4f6"></div><div style="position:absolute;left:765.84px;top:901.44px;width:12.3px;height:5px;background:#f3f4f6"></div><div style="position:absolute;left:784.37px;top:903.44px;width:12.3px;height:3px;background:#f3f4f6"></div><div style="position:absolute;left:100px;top:916.24px;width:703px;height:14px;box-sizing:border-box;border-top:1px solid #424b5b;border-radius:8px"></div><div style="position:absolute;left:110.20px;top:946.91px;font:400 21.9px/25.16px 'Liberation Sans', sans-serif;color:#e4e5e8;white-space:pre;transform:scaleX(1.08);transform-origin:0 0;">...95-48w66</div><div style="position:absolute;left:247.00px;top:964.73px;width:12.3px;height:2px;background:#f3f4f6"></div><div style="position:absolute;left:265.53px;top:964.73px;width:12.3px;height:2px;background:#f3f4f6"></div><div style="position:absolute;left:284.06px;top:952.73px;width:12.3px;height:14px;background:#f3f4f6"></div><div style="position:absolute;left:302.59px;top:962.73px;width:12.3px;height:4px;background:#f3f4f6"></div><div style="position:absolute;left:321.12px;top:964.73px;width:12.3px;height:2px;background:#f3f4f6"></div><div style="position:absolute;left:339.65px;top:961.73px;width:12.3px;height:5px;background:#f3f4f6"></div><div style="position:absolute;left:358.18px;top:964.73px;width:12.3px;height:2px;background:#f3f4f6"></div><div style="position:absolute;left:376.71px;top:961.73px;width:12.3px;height:5px;background:#f3f4f6"></div><div style="position:absolute;left:395.24px;top:964.73px;width:12.3px;height:2px;background:#f3f4f6"></div><div style="position:absolute;left:432.30px;top:964.73px;width:12.3px;height:2px;background:#f3f4f6"></div><div style="position:absolute;left:450.83px;top:959.73px;width:12.3px;height:7px;background:#f3f4f6"></div><div style="position:absolute;left:450.83px;top:959.73px;width:12.3px;height:1.2px;background:#f87171"></div><div style="position:absolute;left:469.36px;top:962.73px;width:12.3px;height:4px;background:#f3f4f6"></div><div style="position:absolute;left:487.89px;top:950.73px;width:12.3px;height:16px;background:#f3f4f6"></div><div style="position:absolute;left:506.42px;top:961.73px;width:12.3px;height:5px;background:#f3f4f6"></div><div style="position:absolute;left:524.95px;top:964.73px;width:12.3px;height:2px;background:#f3f4f6"></div><div style="position:absolute;left:543.48px;top:964.73px;width:12.3px;height:2px;background:#f3f4f6"></div><div style="position:absolute;left:562.01px;top:960.73px;width:12.3px;height:6px;background:#f3f4f6"></div><div style="position:absolute;left:580.54px;top:964.73px;width:12.3px;height:2px;background:#f3f4f6"></div><div style="position:absolute;left:599.07px;top:964.73px;width:12.3px;height:2px;background:#f3f4f6"></div><div style="position:absolute;left:617.60px;top:960.73px;width:12.3px;height:6px;background:#f3f4f6"></div><div style="position:absolute;left:636.13px;top:964.73px;width:12.3px;height:2px;background:#f3f4f6"></div><div style="position:absolute;left:654.66px;top:964.73px;width:12.3px;height:2px;background:#f3f4f6"></div><div style="position:absolute;left:673.19px;top:964.73px;width:12.3px;height:2px;background:#f3f4f6"></div><div style="position:absolute;left:691.72px;top:964.73px;width:12.3px;height:2px;background:#f3f4f6"></div><div style="position:absolute;left:710.25px;top:964.73px;width:12.3px;height:2px;background:#f3f4f6"></div><div style="position:absolute;left:728.78px;top:964.73px;width:12.3px;height:2px;background:#f3f4f6"></div><div style="position:absolute;left:747.31px;top:964.73px;width:12.3px;height:2px;background:#f3f4f6"></div><div style="position:absolute;left:765.84px;top:963.73px;width:12.3px;height:3px;background:#f3f4f6"></div><div style="position:absolute;left:784.37px;top:956.73px;width:12.3px;height:10px;background:#f3f4f6"></div><div style="position:absolute;left:100px;top:976.53px;width:703px;height:14px;box-sizing:border-box;border-top:1px solid #424b5b;border-radius:8px"></div><div style="position:absolute;left:110.20px;top:1007.20px;font:400 21.9px/25.16px 'Liberation Sans', sans-serif;color:#e4e5e8;white-space:pre;transform:scaleX(1.08);transform-origin:0 0;">...95-g8665</div><div style="position:absolute;left:247.00px;top:1025.02px;width:12.3px;height:2px;background:#f3f4f6"></div><div style="position:absolute;left:265.53px;top:1026.02px;width:12.3px;height:1px;background:#f3f4f6"></div><div style="position:absolute;left:284.06px;top:1001.02px;width:12.3px;height:26px;background:#f3f4f6"></div><div style="position:absolute;left:302.59px;top:1018.02px;width:12.3px;height:9px;background:#f3f4f6"></div><div style="position:absolute;left:321.12px;top:1023.02px;width:12.3px;height:4px;background:#f3f4f6"></div><div style="position:absolute;left:339.65px;top:1025.02px;width:12.3px;height:2px;background:#f3f4f6"></div><div style="position:absolute;left:358.18px;top:1026.02px;width:12.3px;height:1px;background:#f3f4f6"></div><div style="position:absolute;left:376.71px;top:1026.02px;width:12.3px;height:1px;background:#f3f4f6"></div><div style="position:absolute;left:395.24px;top:1026.02px;width:12.3px;height:1px;background:#f3f4f6"></div><div style="position:absolute;left:432.30px;top:1026.02px;width:12.3px;height:1px;background:#f3f4f6"></div><div style="position:absolute;left:450.83px;top:1025.02px;width:12.3px;height:2px;background:#f3f4f6"></div><div style="position:absolute;left:469.36px;top:1026.02px;width:12.3px;height:1px;background:#f3f4f6"></div><div style="position:absolute;left:487.89px;top:1024.02px;width:12.3px;height:3px;background:#f3f4f6"></div><div style="position:absolute;left:506.42px;top:1024.02px;width:12.3px;height:3px;background:#f3f4f6"></div><div style="position:absolute;left:524.95px;top:1024.02px;width:12.3px;height:3px;background:#f3f4f6"></div><div style="position:absolute;left:543.48px;top:1026.02px;width:12.3px;height:1px;background:#f3f4f6"></div><div style="position:absolute;left:562.01px;top:1022.02px;width:12.3px;height:5px;background:#f3f4f6"></div><div style="position:absolute;left:580.54px;top:1024.02px;width:12.3px;height:3px;background:#f3f4f6"></div><div style="position:absolute;left:599.07px;top:1026.02px;width:12.3px;height:1px;background:#f3f4f6"></div><div style="position:absolute;left:617.60px;top:1024.02px;width:12.3px;height:3px;background:#f3f4f6"></div><div style="position:absolute;left:636.13px;top:1024.02px;width:12.3px;height:3px;background:#f3f4f6"></div><div style="position:absolute;left:654.66px;top:1026.02px;width:12.3px;height:1px;background:#f3f4f6"></div><div style="position:absolute;left:673.19px;top:1021.02px;width:12.3px;height:6px;background:#f3f4f6"></div><div style="position:absolute;left:673.19px;top:1021.02px;width:12.3px;height:1.2px;background:#f87171"></div><div style="position:absolute;left:691.72px;top:1026.02px;width:12.3px;height:1px;background:#f3f4f6"></div><div style="position:absolute;left:710.25px;top:1026.02px;width:12.3px;height:1px;background:#f3f4f6"></div><div style="position:absolute;left:728.78px;top:1025.02px;width:12.3px;height:2px;background:#f3f4f6"></div><div style="position:absolute;left:747.31px;top:1026.02px;width:12.3px;height:1px;background:#f3f4f6"></div><div style="position:absolute;left:765.84px;top:1017.02px;width:12.3px;height:10px;background:#f3f4f6"></div><div style="position:absolute;left:784.37px;top:1026.02px;width:12.3px;height:1px;background:#f3f4f6"></div><div style="position:absolute;left:100px;top:1036.82px;width:703px;height:14px;box-sizing:border-box;border-top:1px solid #424b5b;border-radius:8px"></div><div style="position:absolute;left:110.20px;top:1067.49px;font:400 21.9px/25.16px 'Liberation Sans', sans-serif;color:#e4e5e8;white-space:pre;transform:scaleX(1.08);transform-origin:0 0;">...95-bzbs5</div><div style="position:absolute;left:247.00px;top:1083.31px;width:12.3px;height:4px;background:#f3f4f6"></div><div style="position:absolute;left:265.53px;top:1069.31px;width:12.3px;height:18px;background:#f3f4f6"></div><div style="position:absolute;left:284.06px;top:1068.31px;width:12.3px;height:19px;background:#f3f4f6"></div><div style="position:absolute;left:284.06px;top:1068.31px;width:12.3px;height:1.2px;background:#f87171"></div><div style="position:absolute;left:302.59px;top:1086.31px;width:12.3px;height:1px;background:#f3f4f6"></div><div style="position:absolute;left:321.12px;top:1086.31px;width:12.3px;height:1px;background:#f3f4f6"></div><div style="position:absolute;left:339.65px;top:1086.31px;width:12.3px;height:1px;background:#f3f4f6"></div><div style="position:absolute;left:358.18px;top:1086.31px;width:12.3px;height:1px;background:#f3f4f6"></div><div style="position:absolute;left:376.71px;top:1086.31px;width:12.3px;height:1px;background:#f3f4f6"></div><div style="position:absolute;left:395.24px;top:1086.31px;width:12.3px;height:1px;background:#f3f4f6"></div><div style="position:absolute;left:432.30px;top:1084.31px;width:12.3px;height:3px;background:#f3f4f6"></div><div style="position:absolute;left:450.83px;top:1085.31px;width:12.3px;height:2px;background:#f3f4f6"></div><div style="position:absolute;left:469.36px;top:1074.31px;width:12.3px;height:13px;background:#f3f4f6"></div><div style="position:absolute;left:487.89px;top:1086.31px;width:12.3px;height:1px;background:#f3f4f6"></div><div style="position:absolute;left:506.42px;top:1086.31px;width:12.3px;height:1px;background:#f3f4f6"></div><div style="position:absolute;left:524.95px;top:1086.31px;width:12.3px;height:1px;background:#f3f4f6"></div><div style="position:absolute;left:543.48px;top:1086.31px;width:12.3px;height:1px;background:#f3f4f6"></div><div style="position:absolute;left:562.01px;top:1082.31px;width:12.3px;height:5px;background:#f3f4f6"></div><div style="position:absolute;left:580.54px;top:1086.31px;width:12.3px;height:1px;background:#f3f4f6"></div><div style="position:absolute;left:599.07px;top:1086.31px;width:12.3px;height:1px;background:#f3f4f6"></div><div style="position:absolute;left:617.60px;top:1086.31px;width:12.3px;height:1px;background:#f3f4f6"></div><div style="position:absolute;left:636.13px;top:1084.31px;width:12.3px;height:3px;background:#f3f4f6"></div><div style="position:absolute;left:654.66px;top:1086.31px;width:12.3px;height:1px;background:#f3f4f6"></div><div style="position:absolute;left:673.19px;top:1081.31px;width:12.3px;height:6px;background:#f3f4f6"></div><div style="position:absolute;left:691.72px;top:1075.31px;width:12.3px;height:12px;background:#f3f4f6"></div><div style="position:absolute;left:710.25px;top:1086.31px;width:12.3px;height:1px;background:#f3f4f6"></div><div style="position:absolute;left:728.78px;top:1085.31px;width:12.3px;height:2px;background:#f3f4f6"></div><div style="position:absolute;left:747.31px;top:1082.31px;width:12.3px;height:5px;background:#f3f4f6"></div><div style="position:absolute;left:765.84px;top:1083.31px;width:12.3px;height:4px;background:#f3f4f6"></div><div style="position:absolute;left:784.37px;top:1086.31px;width:12.3px;height:1px;background:#f3f4f6"></div><div style="position:absolute;left:100px;top:1097.11px;width:703px;height:14px;box-sizing:border-box;border-top:1px solid #424b5b;border-radius:8px"></div><div style="position:absolute;left:110.20px;top:1127.78px;font:400 21.9px/25.16px 'Liberation Sans', sans-serif;color:#e4e5e8;white-space:pre;transform:scaleX(1.08);transform-origin:0 0;">...95-brhnn</div><div style="position:absolute;left:265.53px;top:1145.60px;width:12.3px;height:2px;background:#f3f4f6"></div><div style="position:absolute;left:284.06px;top:1124.60px;width:12.3px;height:23px;background:#f3f4f6"></div><div style="position:absolute;left:302.59px;top:1138.60px;width:12.3px;height:9px;background:#f3f4f6"></div><div style="position:absolute;left:321.12px;top:1143.60px;width:12.3px;height:4px;background:#f3f4f6"></div><div style="position:absolute;left:339.65px;top:1136.60px;width:12.3px;height:11px;background:#f3f4f6"></div><div style="position:absolute;left:358.18px;top:1137.60px;width:12.3px;height:10px;background:#f3f4f6"></div><div style="position:absolute;left:376.71px;top:1145.60px;width:12.3px;height:2px;background:#f3f4f6"></div><div style="position:absolute;left:395.24px;top:1144.60px;width:12.3px;height:3px;background:#f3f4f6"></div><div style="position:absolute;left:432.30px;top:1143.60px;width:12.3px;height:4px;background:#f3f4f6"></div><div style="position:absolute;left:450.83px;top:1141.60px;width:12.3px;height:6px;background:#f3f4f6"></div><div style="position:absolute;left:469.36px;top:1135.60px;width:12.3px;height:12px;background:#f3f4f6"></div><div style="position:absolute;left:487.89px;top:1144.60px;width:12.3px;height:3px;background:#f3f4f6"></div><div style="position:absolute;left:506.42px;top:1141.60px;width:12.3px;height:6px;background:#f3f4f6"></div><div style="position:absolute;left:524.95px;top:1145.60px;width:12.3px;height:2px;background:#f3f4f6"></div><div style="position:absolute;left:543.48px;top:1145.60px;width:12.3px;height:2px;background:#f3f4f6"></div><div style="position:absolute;left:562.01px;top:1143.60px;width:12.3px;height:4px;background:#f3f4f6"></div><div style="position:absolute;left:580.54px;top:1144.60px;width:12.3px;height:3px;background:#f3f4f6"></div><div style="position:absolute;left:599.07px;top:1145.60px;width:12.3px;height:2px;background:#f3f4f6"></div><div style="position:absolute;left:617.60px;top:1145.60px;width:12.3px;height:2px;background:#f3f4f6"></div><div style="position:absolute;left:636.13px;top:1145.60px;width:12.3px;height:2px;background:#f3f4f6"></div><div style="position:absolute;left:654.66px;top:1141.60px;width:12.3px;height:6px;background:#f3f4f6"></div><div style="position:absolute;left:673.19px;top:1145.60px;width:12.3px;height:2px;background:#f3f4f6"></div><div style="position:absolute;left:691.72px;top:1145.60px;width:12.3px;height:2px;background:#f3f4f6"></div><div style="position:absolute;left:710.25px;top:1145.60px;width:12.3px;height:2px;background:#f3f4f6"></div><div style="position:absolute;left:728.78px;top:1145.60px;width:12.3px;height:2px;background:#f3f4f6"></div><div style="position:absolute;left:747.31px;top:1145.60px;width:12.3px;height:2px;background:#f3f4f6"></div><div style="position:absolute;left:765.84px;top:1143.60px;width:12.3px;height:4px;background:#f3f4f6"></div><div style="position:absolute;left:784.37px;top:1142.60px;width:12.3px;height:5px;background:#f3f4f6"></div><div style="position:absolute;left:100px;top:1157.40px;width:703px;height:14px;box-sizing:border-box;border-top:1px solid #424b5b;border-radius:8px"></div><div style="position:absolute;left:110.20px;top:1188.07px;font:400 21.9px/25.16px 'Liberation Sans', sans-serif;color:#e4e5e8;white-space:pre;transform:scaleX(1.08);transform-origin:0 0;">...95-gfbmf</div><div style="position:absolute;left:265.53px;top:1205.89px;width:12.3px;height:2px;background:#f3f4f6"></div><div style="position:absolute;left:284.06px;top:1188.89px;width:12.3px;height:19px;background:#f3f4f6"></div><div style="position:absolute;left:302.59px;top:1200.89px;width:12.3px;height:7px;background:#f3f4f6"></div><div style="position:absolute;left:321.12px;top:1205.89px;width:12.3px;height:2px;background:#f3f4f6"></div><div style="position:absolute;left:339.65px;top:1203.89px;width:12.3px;height:4px;background:#f3f4f6"></div><div style="position:absolute;left:358.18px;top:1204.89px;width:12.3px;height:3px;background:#f3f4f6"></div><div style="position:absolute;left:376.71px;top:1205.89px;width:12.3px;height:2px;background:#f3f4f6"></div><div style="position:absolute;left:395.24px;top:1205.89px;width:12.3px;height:2px;background:#f3f4f6"></div><div style="position:absolute;left:432.30px;top:1205.89px;width:12.3px;height:2px;background:#f3f4f6"></div><div style="position:absolute;left:450.83px;top:1193.89px;width:12.3px;height:14px;background:#f3f4f6"></div><div style="position:absolute;left:469.36px;top:1205.89px;width:12.3px;height:2px;background:#f3f4f6"></div><div style="position:absolute;left:487.89px;top:1205.89px;width:12.3px;height:2px;background:#f3f4f6"></div><div style="position:absolute;left:506.42px;top:1202.89px;width:12.3px;height:5px;background:#f3f4f6"></div><div style="position:absolute;left:524.95px;top:1205.89px;width:12.3px;height:2px;background:#f3f4f6"></div><div style="position:absolute;left:543.48px;top:1204.89px;width:12.3px;height:3px;background:#f3f4f6"></div><div style="position:absolute;left:562.01px;top:1204.89px;width:12.3px;height:3px;background:#f3f4f6"></div><div style="position:absolute;left:580.54px;top:1201.89px;width:12.3px;height:6px;background:#f3f4f6"></div><div style="position:absolute;left:599.07px;top:1205.89px;width:12.3px;height:2px;background:#f3f4f6"></div><div style="position:absolute;left:617.60px;top:1201.89px;width:12.3px;height:6px;background:#f3f4f6"></div><div style="position:absolute;left:636.13px;top:1205.89px;width:12.3px;height:2px;background:#f3f4f6"></div><div style="position:absolute;left:654.66px;top:1203.89px;width:12.3px;height:4px;background:#f3f4f6"></div><div style="position:absolute;left:673.19px;top:1199.89px;width:12.3px;height:8px;background:#f3f4f6"></div><div style="position:absolute;left:691.72px;top:1205.89px;width:12.3px;height:2px;background:#f3f4f6"></div><div style="position:absolute;left:710.25px;top:1205.89px;width:12.3px;height:2px;background:#f3f4f6"></div><div style="position:absolute;left:728.78px;top:1203.89px;width:12.3px;height:4px;background:#f3f4f6"></div><div style="position:absolute;left:747.31px;top:1205.89px;width:12.3px;height:2px;background:#f3f4f6"></div><div style="position:absolute;left:765.84px;top:1203.89px;width:12.3px;height:4px;background:#f3f4f6"></div><div style="position:absolute;left:784.37px;top:1200.89px;width:12.3px;height:7px;background:#f3f4f6"></div><div style="position:absolute;left:100px;top:1217.69px;width:703px;height:14px;box-sizing:border-box;border-top:1px solid #424b5b;border-radius:8px"></div><div style="position:absolute;left:110.20px;top:1248.36px;font:400 21.9px/25.16px 'Liberation Sans', sans-serif;color:#e4e5e8;white-space:pre;transform:scaleX(1.08);transform-origin:0 0;">...95-b87rl</div><div style="position:absolute;left:265.53px;top:1267.18px;width:12.3px;height:1px;background:#f3f4f6"></div><div style="position:absolute;left:284.06px;top:1251.18px;width:12.3px;height:17px;background:#f3f4f6"></div><div style="position:absolute;left:284.06px;top:1251.18px;width:12.3px;height:1.2px;background:#f87171"></div><div style="position:absolute;left:302.59px;top:1257.18px;width:12.3px;height:11px;background:#f3f4f6"></div><div style="position:absolute;left:321.12px;top:1267.18px;width:12.3px;height:1px;background:#f3f4f6"></div><div style="position:absolute;left:339.65px;top:1257.18px;width:12.3px;height:11px;background:#f3f4f6"></div><div style="position:absolute;left:358.18px;top:1267.18px;width:12.3px;height:1px;background:#f3f4f6"></div><div style="position:absolute;left:376.71px;top:1267.18px;width:12.3px;height:1px;background:#f3f4f6"></div><div style="position:absolute;left:395.24px;top:1255.18px;width:12.3px;height:13px;background:#f3f4f6"></div><div style="position:absolute;left:413.77px;top:1266.18px;width:12.3px;height:2px;background:#f3f4f6"></div><div style="position:absolute;left:432.30px;top:1266.18px;width:12.3px;height:2px;background:#f3f4f6"></div><div style="position:absolute;left:450.83px;top:1261.18px;width:12.3px;height:7px;background:#f3f4f6"></div><div style="position:absolute;left:469.36px;top:1267.18px;width:12.3px;height:1px;background:#f3f4f6"></div><div style="position:absolute;left:487.89px;top:1267.18px;width:12.3px;height:1px;background:#f3f4f6"></div><div style="position:absolute;left:506.42px;top:1266.18px;width:12.3px;height:2px;background:#f3f4f6"></div><div style="position:absolute;left:524.95px;top:1267.18px;width:12.3px;height:1px;background:#f3f4f6"></div><div style="position:absolute;left:543.48px;top:1267.18px;width:12.3px;height:1px;background:#f3f4f6"></div><div style="position:absolute;left:562.01px;top:1265.18px;width:12.3px;height:3px;background:#f3f4f6"></div><div style="position:absolute;left:580.54px;top:1267.18px;width:12.3px;height:1px;background:#f3f4f6"></div><div style="position:absolute;left:599.07px;top:1264.18px;width:12.3px;height:4px;background:#f3f4f6"></div><div style="position:absolute;left:617.60px;top:1267.18px;width:12.3px;height:1px;background:#f3f4f6"></div><div style="position:absolute;left:636.13px;top:1267.18px;width:12.3px;height:1px;background:#f3f4f6"></div><div style="position:absolute;left:654.66px;top:1265.18px;width:12.3px;height:3px;background:#f3f4f6"></div><div style="position:absolute;left:673.19px;top:1267.18px;width:12.3px;height:1px;background:#f3f4f6"></div><div style="position:absolute;left:691.72px;top:1266.18px;width:12.3px;height:2px;background:#f3f4f6"></div><div style="position:absolute;left:710.25px;top:1267.18px;width:12.3px;height:1px;background:#f3f4f6"></div><div style="position:absolute;left:728.78px;top:1267.18px;width:12.3px;height:1px;background:#f3f4f6"></div><div style="position:absolute;left:747.31px;top:1267.18px;width:12.3px;height:1px;background:#f3f4f6"></div><div style="position:absolute;left:765.84px;top:1261.18px;width:12.3px;height:7px;background:#f3f4f6"></div><div style="position:absolute;left:784.37px;top:1267.18px;width:12.3px;height:1px;background:#f3f4f6"></div><div style="position:absolute;left:100px;top:1277.98px;width:703px;height:14px;box-sizing:border-box;border-top:1px solid #424b5b;border-radius:8px"></div><div style="position:absolute;left:1439.50px;top:188.46px;font:400 19.6px/22.52px 'Liberation Sans', sans-serif;color:#9ca3af;white-space:pre;transform:scaleX(1.013);transform-origin:0 0;">1 min delay: logs are compacted before being available</div><div style="position:absolute;left:824px;top:218px;width:1697px;height:778px;box-sizing:border-box;background:#3b4252;"></div><div style="position:absolute;left:824px;top:218px;width:1697px;height:771px;overflow:hidden"><div style="position:absolute;left:13px;top:-17px;font:400 18.75px/25px 'Liberation Mono', monospace;color:#eceff4;white-space:pre">2024-12-04T11:56:32.286911Z <span style="color:#a3be8c">INFO</span> Finished uploading 087bf0c2aca04921bb0962f5e4389c1c.term to object store target=windmill_indexer::indexer_ee span={&quot;name&quot;:&quot;job_indexer&quot;}
2024-12-04T11:56:32.292389Z <span style="color:#a3be8c">INFO</span> Finished uploading a8ac8610b5714eb796507a8e3c5d73ab.pos to object store target=windmill_indexer::indexer_ee span={&quot;name&quot;:&quot;job_indexer&quot;}
2024-12-04T11:56:32.312081Z <span style="color:#a3be8c">INFO</span> Finished uploading 087bf0c2aca04921bb0962f5e4389c1c.pos to object store target=windmill_indexer::indexer_ee span={&quot;name&quot;:&quot;job_indexer&quot;}
2024-12-04T11:56:32.346576Z <span style="color:#a3be8c">INFO</span> Finished uploading 7f9f75d8a9ac46a78d19db7ee6b5dc83.term to object store target=windmill_indexer::indexer_ee span={&quot;name&quot;:&quot;job_indexer&quot;}
2024-12-04T11:56:32.422399Z <span style="color:#a3be8c">INFO</span> Finished uploading 023d3e3092fe473d85fae3922e779033.idx to object store target=windmill_indexer::indexer_ee span={&quot;name&quot;:&quot;job_indexer&quot;}
2024-12-04T11:56:32.427543Z <span style="color:#a3be8c">INFO</span> Finished uploading a8ac8610b5714eb796507a8e3c5d73ab.store to object store target=windmill_indexer::indexer_ee span={&quot;name&quot;:&quot;job_indexer&quot;}
2024-12-04T11:56:32.474112Z <span style="color:#a3be8c">INFO</span> Finished uploading 087bf0c2aca04921bb0962f5e4389c1c.store to object store target=windmill_indexer::indexer_ee span={&quot;name&quot;:&quot;job_indexer&quot;}
2024-12-04T11:56:32.506066Z <span style="color:#a3be8c">INFO</span> Finished uploading 7f9f75d8a9ac46a78d19db7ee6b5dc83.idx to object store target=windmill_indexer::indexer_ee span={&quot;name&quot;:&quot;job_indexer&quot;}
2024-12-04T11:56:32.550655Z <span style="color:#a3be8c">INFO</span> Finished uploading 023d3e3092fe473d85fae3922e779033.pos to object store target=windmill_indexer::indexer_ee span={&quot;name&quot;:&quot;job_indexer&quot;}
2024-12-04T11:56:32.636953Z <span style="color:#a3be8c">INFO</span> Finished uploading 7f9f75d8a9ac46a78d19db7ee6b5dc83.pos to object store target=windmill_indexer::indexer_ee span={&quot;name&quot;:&quot;job_indexer&quot;}
2024-12-04T11:56:32.683709Z <span style="color:#a3be8c">INFO</span> Finished uploading 023d3e3092fe473d85fae3922e779033.store to object store target=windmill_indexer::indexer_ee span={&quot;name&quot;:&quot;job_indexer&quot;}
2024-12-04T11:56:32.834289Z <span style="color:#a3be8c">INFO</span> Finished uploading 7f9f75d8a9ac46a78d19db7ee6b5dc83.store to object store target=windmill_indexer::indexer_ee span={&quot;name&quot;:&quot;job_indexer&quot;}
2024-12-04T11:56:32.939816Z <span style="color:#a3be8c">INFO</span> Uploaded &quot;meta.json&quot; to object store target=windmill_indexer::indexer_ee span={&quot;name&quot;:&quot;job_indexer&quot;}
2024-12-04T11:56:32.942291Z <span style="color:#a3be8c">INFO</span> Finished commit. New jobs were added to the index target=windmill_indexer::completed_runs_ee span={&quot;name&quot;:&quot;job_indexer&quot;}
2024-12-04T11:56:32.996076Z <span style="color:#a3be8c">INFO</span> Uploaded &quot;.track_indexed_jobs.json&quot; to object store target=windmill_indexer::indexer_ee span={&quot;name&quot;:&quot;job_indexer&quot;}
2024-12-04T11:56:32.998759Z <span style="color:#a3be8c">INFO</span> Saving indexed jobs tracking metadata, most recently indexed job was created_at=2024-12-04 11:56:27.712087 UTC target=windmill_indexer::completed_runs_ee
2024-12-04T11:56:32.999371Z <span style="color:#a3be8c">INFO</span> response latency=0 status=200 target=windmill_api::tracing_init span={&quot;method&quot;:&quot;GET&quot;,&quot;trace_id&quot;:&quot;e7ed5ede-2b8c-4fea-a1b2&quot;}
2024-12-04T11:56:32.999996Z <span style="color:#a3be8c">INFO</span> Index size is currently: 10.7 GB (in /tmp/windmill/search/completed_jobs_index) target=windmill_indexer::indexer_ee span={&quot;name&quot;:&quot;job_indexer&quot;}
2024-12-04T11:56:33.298170Z <span style="color:#a3be8c">INFO</span> response latency=1 status=200 target=windmill_api::tracing_init span={&quot;email&quot;:&quot;etienne@windmill.dev&quot;,&quot;method&quot;:&quot;GET&quot;,&quot;trace_id&quot;:&quot;x&quot;}
2024-12-04T11:56:33.972960Z <span style="color:#a3be8c">INFO</span> response latency=0 status=200 target=windmill_api::tracing_init span={&quot;method&quot;:&quot;GET&quot;,&quot;trace_id&quot;:&quot;9378b7a2-a22e-4548-9a1b&quot;}
2024-12-04T11:56:34.558521Z <span style="color:#a3be8c">INFO</span> response latency=0 status=200 target=windmill_api::tracing_init span={&quot;method&quot;:&quot;GET&quot;,&quot;trace_id&quot;:&quot;352c81d5-04d8-4de4-8a1b&quot;}
2024-12-04T11:56:34.606946Z <span style="color:#a3be8c">INFO</span> 18.236167907714844 mb allocated/112.59765625 mb resident target=windmill::monitor
2024-12-04T11:56:34.927765Z <span style="color:#a3be8c">INFO</span> response latency=0 status=200 target=windmill_api::tracing_init span={&quot;method&quot;:&quot;GET&quot;,&quot;trace_id&quot;:&quot;d08054b5-12c0-4ff0-b1a2&quot;}
2024-12-04T11:56:38.972463Z <span style="color:#a3be8c">INFO</span> response latency=0 status=200 target=windmill_api::tracing_init span={&quot;method&quot;:&quot;GET&quot;,&quot;trace_id&quot;:&quot;1a8ba812-1b0d-48d2-9a1b&quot;}
2024-12-04T11:56:43.973317Z <span style="color:#a3be8c">INFO</span> response latency=0 status=200 target=windmill_api::tracing_init span={&quot;method&quot;:&quot;GET&quot;,&quot;trace_id&quot;:&quot;0d2475aa-9ec9-4508-9a1b&quot;}
2024-12-04T11:56:47.334766Z <span style="color:#a3be8c">INFO</span> response latency=0 status=200 target=windmill_api::tracing_init span={&quot;method&quot;:&quot;GET&quot;,&quot;trace_id&quot;:&quot;457ab19c-08e8-44e3-b1a2&quot;}
2024-12-04T11:56:48.972687Z <span style="color:#a3be8c">INFO</span> response latency=0 status=200 target=windmill_api::tracing_init span={&quot;method&quot;:&quot;GET&quot;,&quot;trace_id&quot;:&quot;5951958c-f6f1-46ac-a1b2&quot;}
2024-12-04T11:56:49.562549Z <span style="color:#a3be8c">INFO</span> response latency=0 status=200 target=windmill_api::tracing_init span={&quot;method&quot;:&quot;GET&quot;,&quot;trace_id&quot;:&quot;7ec8df08-b0e3-4bfe-9a1b&quot;}
2024-12-04T11:56:49.934741Z <span style="color:#a3be8c">INFO</span> response latency=0 status=200 target=windmill_api::tracing_init span={&quot;method&quot;:&quot;GET&quot;,&quot;trace_id&quot;:&quot;8db15a26-cd36-4be2-9a1b&quot;}
2024-12-04T11:56:53.973021Z <span style="color:#a3be8c">INFO</span> response latency=0 status=200 target=windmill_api::tracing_init span={&quot;method&quot;:&quot;GET&quot;,&quot;trace_id&quot;:&quot;924afbd4-407a-450f-b1a2&quot;}
2024-12-04T11:56:58.972456Z <span style="color:#a3be8c">INFO</span> response latency=0 status=200 target=windmill_api::tracing_init span={&quot;method&quot;:&quot;GET&quot;,&quot;trace_id&quot;:&quot;3e1c9322-ad3e-449c-8a1b&quot;}</div></div><div style="position:absolute;left:824px;top:989px;width:764px;height:7px;box-sizing:border-box;background:#a3abb8;border-radius:4px;"></div><div style="position:absolute;left:831.00px;top:997.38px;font:400 22.9px/26.31px 'Liberation Sans', sans-serif;color:#f3f4f6;white-space:pre;-webkit-text-stroke:0.6px #f3f4f6;">12/04, 12:57 PM</div><div style="position:absolute;left:824px;top:1027px;width:1697px;height:257px;box-sizing:border-box;background:#3b4252;"></div><div style="position:absolute;left:824px;top:1027px;width:1697px;height:257px;overflow:hidden"><div style="position:absolute;left:13px;top:31px;font:400 18.75px/25px 'Liberation Mono', monospace;color:#eceff4;white-space:pre">2024-12-04T11:57:02.351480Z <span style="color:#a3be8c">INFO</span> response latency=0 status=200 target=windmill_api::tracing_init span={&quot;method&quot;:&quot;GET&quot;,&quot;trace_id&quot;:&quot;82dc263e-47df-4c7a-b1a2&quot;}
2024-12-04T11:57:03.972826Z <span style="color:#a3be8c">INFO</span> response latency=0 status=200 target=windmill_api::tracing_init span={&quot;method&quot;:&quot;GET&quot;,&quot;trace_id&quot;:&quot;b99caeab-bfbc-4ec1-8a1b&quot;}
2024-12-04T11:57:04.572095Z <span style="color:#a3be8c">INFO</span> response latency=0 status=200 target=windmill_api::tracing_init span={&quot;method&quot;:&quot;GET&quot;,&quot;trace_id&quot;:&quot;30ce6c1c-82f0-4227-9a1b&quot;}
2024-12-04T11:57:04.608561Z <span style="color:#a3be8c">INFO</span> 18.046356201171875 mb allocated/95.08984375 mb resident target=windmill::monitor
2024-12-04T11:57:04.947378Z <span style="color:#a3be8c">INFO</span> response latency=0 status=200 target=windmill_api::tracing_init span={&quot;method&quot;:&quot;GET&quot;,&quot;trace_id&quot;:&quot;5658023a-dfda-475b-9a1b&quot;}
2024-12-04T11:57:08.972601Z <span style="color:#a3be8c">INFO</span> response latency=0 status=200 target=windmill_api::tracing_init span={&quot;method&quot;:&quot;GET&quot;,&quot;trace_id&quot;:&quot;33cb5edc-1841-45b3-8a1b&quot;}
2024-12-04T11:57:13.973057Z <span style="color:#a3be8c">INFO</span> response latency=0 status=200 target=windmill_api::tracing_init span={&quot;method&quot;:&quot;GET&quot;,&quot;trace_id&quot;:&quot;73c2b769-736b-43de-a1b2&quot;}
2024-12-04T11:57:17.363047Z <span style="color:#a3be8c">INFO</span> response latency=0 status=200 target=windmill_api::tracing_init span={&quot;method&quot;:&quot;GET&quot;,&quot;trace_id&quot;:&quot;d6310293-5d92-4b72-a1b2&quot;}
2024-12-04T11:57:18.972482Z <span style="color:#a3be8c">INFO</span> response latency=0 status=200 target=windmill_api::tracing_init span={&quot;method&quot;:&quot;GET&quot;,&quot;trace_id&quot;:&quot;e432ac93-df1f-496e-9a1b&quot;}</div></div><svg style="position:absolute;left:2501.50px;top:1026.50px" width="19" height="19" viewBox="0 0 24 24" fill="none" stroke="#eceff4" stroke-width="1.8" stroke-linecap="round" stroke-linejoin="round" ><path d="m21 21-6-6m6 6v-4.8m0 4.8h-4.8"/><path d="M3 16.2V21m0 0h4.8M3 21l6-6"/><path d="M21 7.8V3m0 0h-4.8M21 3l-6 6"/><path d="M3 7.8V3m0 0h4.8M3 3l6 6"/></svg><div style="position:absolute;left:2534px;top:1051px;width:7px;height:240px;box-sizing:border-box;background:#a3abb8;border-radius:4px;"></div>
</div></body></html>
